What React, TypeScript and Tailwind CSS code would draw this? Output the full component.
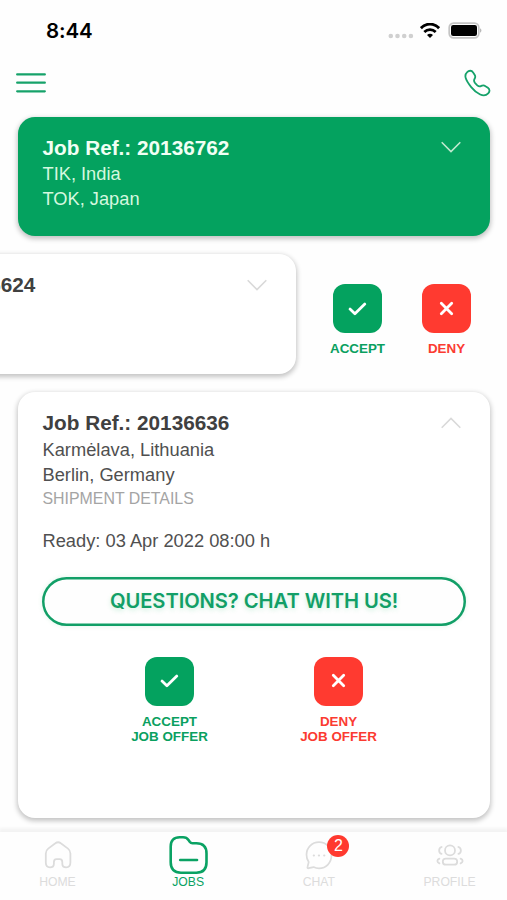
import type { ReactNode } from "react";

function Chevron({ up = false, className = "" }: { up?: boolean; className?: string }) {
  return (
    <svg viewBox="0 0 20 12" fill="none" stroke="currentColor" strokeWidth="1.6" className={`h-3 w-5 ${className}`}>
      <path d={up ? "M.7 10.8 10 1.4l9.3 9.4" : "M.7 1.2 10 10.6l9.3-9.4"} />
    </svg>
  );
}

function StatusBar() {
  return (
    <div className="flex h-[61px] shrink-0 items-center justify-between pl-[46px] pr-[25px]">
      <span className="font-['Inter'] text-[20.5px] font-semibold leading-6 tracking-[-0.1px] text-black">8:44</span>
      <div className="flex items-center">
        <svg viewBox="0 0 26 6" className="mt-[11px] h-[6px] w-[26px]" fill="#d0d0d0">
          <circle cx="2.8" cy="3" r="2.3" />
          <circle cx="9.5" cy="3" r="2.3" />
          <circle cx="16.2" cy="3" r="2.3" />
          <circle cx="22.9" cy="3" r="2.3" />
        </svg>
        <svg viewBox="0 0 20 15" className="ml-[6px] h-[15px] w-5" fill="none" stroke="#000">
          <path d="M.9 5.2C6-.3 14-.3 19.1 5.2" strokeWidth="2.8" />
          <path d="M4.3 9c3.2-3.2 8.2-3.2 11.4 0" strokeWidth="2.7" />
          <path d="M10 15 7 12c1.7-1.6 4.3-1.6 6 0Z" fill="#000" stroke="none" />
        </svg>
        <svg viewBox="0 0 34 17" className="ml-[8px] h-[17px] w-[34px]" fill="none">
          <rect x="1.2" y="1.2" width="29.6" height="14.6" rx="4.3" stroke="#c4c4c4" strokeWidth="1.7" />
          <rect x="3" y="3" width="26" height="11" rx="2.2" fill="#000" />
          <path d="M32.2 6.3c1.6.7 1.6 3.7 0 4.4Z" fill="#aaa" />
        </svg>
      </div>
    </div>
  );
}

function Header() {
  return (
    <div className="flex h-[56px] shrink-0 items-start justify-between px-4 pt-[8px]">
      <svg viewBox="0 0 30 22" className="mt-[3px] h-[22px] w-[30px]" stroke="#16a26a" strokeWidth="2.3" strokeLinecap="round">
        <path d="M1.2 2.4h27.6M1.2 10.7h27.6M1.2 19.3h27.6" />
      </svg>
      <svg viewBox="0 0 28 28" className="h-7 w-7" fill="none" stroke="#16a26a" strokeWidth="1.8" strokeLinejoin="round">
        <path d="M4.2 3.2C6 1.2 8.7 1.3 10.1 3.4l1.5 2.3c.9 1.4.9 2.7 0 4.1-.9 1.5-.8 2.6.3 4l2.4 2.5c1.3 1.2 2.5 1.4 4 .6 1.4-.8 2.8-.7 4.2.3l2.4 1.6c2 1.4 2.1 3.8.3 5.6-2 2.1-4.9 2.6-8 1.1-3.3-1.6-6.3-4-9-7.4-2.7-3.3-4.6-6-5.5-9-.7-2.3-.1-4.4 1.5-5.9Z" />
      </svg>
    </div>
  );
}

function ActionButton({ deny = false, children }: { deny?: boolean; children: ReactNode }) {
  return (
    <div className={`flex w-[77px] flex-col items-center whitespace-nowrap text-center text-[13.4px] font-bold leading-[15px] ${deny ? "text-[#fb3b31]" : "text-[#0aa05f]"}`}>
      <div className={`flex h-[49px] w-[49px] items-center justify-center rounded-[12px] ${deny ? "bg-[#ff3a30]" : "bg-[#04a25f]"}`}>
        <svg viewBox="0.5 0.5 24 24" className="h-6 w-6" fill="none" stroke="#fff" strokeWidth="2.8" strokeLinecap="round" strokeLinejoin="round">
          <path d={deny ? "m6.8 6.8 10.4 10.4M17.2 6.8 6.8 17.2" : "m4.5 12.6 4.9 4.6 9.9-9.6"} />
        </svg>
      </div>
      <div className="mt-[8px]">{children}</div>
    </div>
  );
}

function JobCard({ jobRef, className, chevron, up, children }: { jobRef: string; className: string; chevron: string; up?: boolean; children?: ReactNode }) {
  return (
    <article className={`w-[472px] shrink-0 rounded-[17px] px-[24.5px] pt-[19px] shadow-[0_2px_5px_1px_rgba(0,0,0,0.23)] ${className}`}>
      <div className="flex items-center justify-between">
        <h2 className="whitespace-nowrap text-[20.75px] font-bold leading-6">Job Ref.: {jobRef}</h2>
        <Chevron up={up} className={`mr-[5px] ${chevron}`} />
      </div>
      {children}
    </article>
  );
}

function Tab({ label, active = false, children }: { label: string; active?: boolean; children: ReactNode }) {
  return (
    <div className={`flex w-[130.7px] shrink-0 flex-col items-center ${active ? "text-[#0aa263]" : "text-[#dcdcdc]"}`}>
      <div className="relative flex h-[40px] w-[40px] items-center justify-center">{children}</div>
      <span className="text-[12.2px] leading-[14px]">{label}</span>
    </div>
  );
}

function TabBar() {
  return (
    <nav className="z-10 flex h-[68px] shrink-0 items-start justify-center bg-[#fefefe] pt-[3px] shadow-[0_-3px_3px_1px_rgba(0,0,0,0.045)]">
      <Tab label="HOME">
        <svg viewBox="0 0 28 30" className="ml-[2px] h-[30px] w-7 shrink-0" fill="none" stroke="currentColor" strokeWidth="1.8" strokeLinejoin="round">
          <path d="M4.2 8.6 11.4 3.3c1.8-1.4 3.6-1.4 5.4 0L24 8.6c1.7 1.3 2.4 2.9 2.4 5v9c0 3.1-1.5 4.8-4.2 4.8-2.5 0-3.9-1.2-3.9-3.6v-1.5c0-2.3-.8-3.2-2.5-3.2h-3.4c-1.7 0-2.5.9-2.5 3.2v1.5c0 2.4-1.4 3.6-3.9 3.6-2.7 0-4.2-1.7-4.2-4.8v-9c0-2.1.7-3.7 2.4-5Z" />
        </svg>
      </Tab>
      <Tab label="JOBS" active>
        <svg viewBox="-0.8 0 40 40" className="h-10 w-10" fill="none" stroke="currentColor" strokeWidth="2.6" strokeLinecap="round" strokeLinejoin="round">
          <path d="M1.9 11.5c0-6 3.1-9.2 9-9.2h3.4c2.7 0 4.1.8 5.6 2.9l1 1.5c.8 1.1 1.4 1.5 2.8 1.5h3.8c6.7 0 10.2 3.6 10.2 10.2v8.8c0 7-3.5 10.5-10.2 10.5H12.1c-6.7 0-10.2-3.5-10.2-10.5Z" />
          <path d="M11.4 25h16.8" />
        </svg>
      </Tab>
      <Tab label="CHAT">
        <svg viewBox="0 0 28 30" className="h-[30px] w-7" fill="none" stroke="currentColor" strokeWidth="1.7" strokeLinejoin="round">
          <path d="M14 2.2C6.8 2.2 1.5 7.7 1.5 14.8c0 2.9.8 5.2 2.2 7.2L2.5 27c-.3 1 .2 1.5 1.2 1.2l4.9-1.1c1.7.9 3.3 1.3 5.4 1.3 7.2 0 12.5-5.8 12.5-13.3S21.2 2.2 14 2.2Z" />
          <path d="M8.8 15.5h.1m5 0h.1m5.2 0h.1" strokeWidth="2.2" strokeLinecap="round" />
        </svg>
        <span className="absolute left-[28.5px] top-0 flex h-[22px] w-[22px] items-center justify-center rounded-full bg-[#ff392f] text-[16px] leading-[22px] text-white">2</span>
      </Tab>
      <Tab label="PROFILE">
        <svg viewBox="0 0 28 24" className="h-6 w-7" fill="none" stroke="currentColor" strokeWidth="1.8" strokeLinecap="round">
          <circle cx="14" cy="7.4" r="5" />
          <path d="M9.8 15.7h8.4a3 3 0 0 1 0 6H9.8a3 3 0 0 1 0-6Z" />
          <path d="M5.6 4C2.3 5 2.3 9.8 5.6 10.8M22.4 4c3.3 1 3.3 5.8 0 6.8M3.4 15.6c-2.7 1.2-2.7 3.6 0 4.8M24.6 15.6c2.7 1.2 2.7 3.6 0 4.8" />
        </svg>
      </Tab>
    </nav>
  );
}

export default function App() {
  return (
    <div className="flex h-[900px] w-[507px] flex-col overflow-hidden bg-[#fefefe] font-['Liberation_Sans',Arial,sans-serif]">
      <StatusBar />
      <Header />
      <main className="flex h-[715px] shrink-0 flex-col gap-[18px] pl-[18px]">
        <JobCard jobRef="20136762" className="h-[119px] bg-[#04a25f] text-[#f1fff4]" chevron="-mt-[2px] text-[#bfe9cf]">
          <div className="mt-[2px] text-[18.25px] leading-[24.5px] text-[#d5f8df]">
            <p>TIK, India</p>
            <p>TOK, Japan</p>
          </div>
        </JobCard>
        <section className="-ml-[194px] flex h-[120px] shrink-0">
          <JobCard jobRef="20136624" className="h-[120px] bg-white text-[#404040]" chevron="text-[#d9d9d9]" />
          <div className="ml-[23px] flex gap-[12px] pt-[30px]">
            <ActionButton>ACCEPT</ActionButton>
            <ActionButton deny>DENY</ActionButton>
          </div>
        </section>
        <JobCard jobRef="20136636" className="h-[426px] bg-white text-[#404040]" chevron="text-[#d9d9d9]" up>
          <div className="mt-[3px] text-[18.3px] leading-[24.5px] text-[#505050]">
            <p>Karmėlava, Lithuania</p>
            <p>Berlin, Germany</p>
            <p className="text-[15.9px] leading-6 text-[#a4a4a4]">SHIPMENT DETAILS</p>
            <p className="mt-[17.5px]">Ready: 03 Apr 2022 08:00 h</p>
          </div>
          <button className="mt-[23.5px] -ml-[0.5px] flex h-[49px] w-[424px] items-center justify-center rounded-full bg-[#fefefe] font-['Inter'] text-[20.2px] font-semibold tracking-[-0.08px] text-[#129f67] shadow-[inset_0_0_0_2.5px_#129f67,0_0_5px_rgba(0,180,90,0.12)] [text-shadow:0_2px_5px_rgba(0,180,90,0.2)]">
            QUESTIONS? CHAT WITH US!
          </button>
          <div className="mt-[31px] flex justify-center gap-[92px]">
            <ActionButton>ACCEPT<br />JOB OFFER</ActionButton>
            <ActionButton deny>DENY<br />JOB OFFER</ActionButton>
          </div>
        </JobCard>
      </main>
      <TabBar />
    </div>
  );
}
